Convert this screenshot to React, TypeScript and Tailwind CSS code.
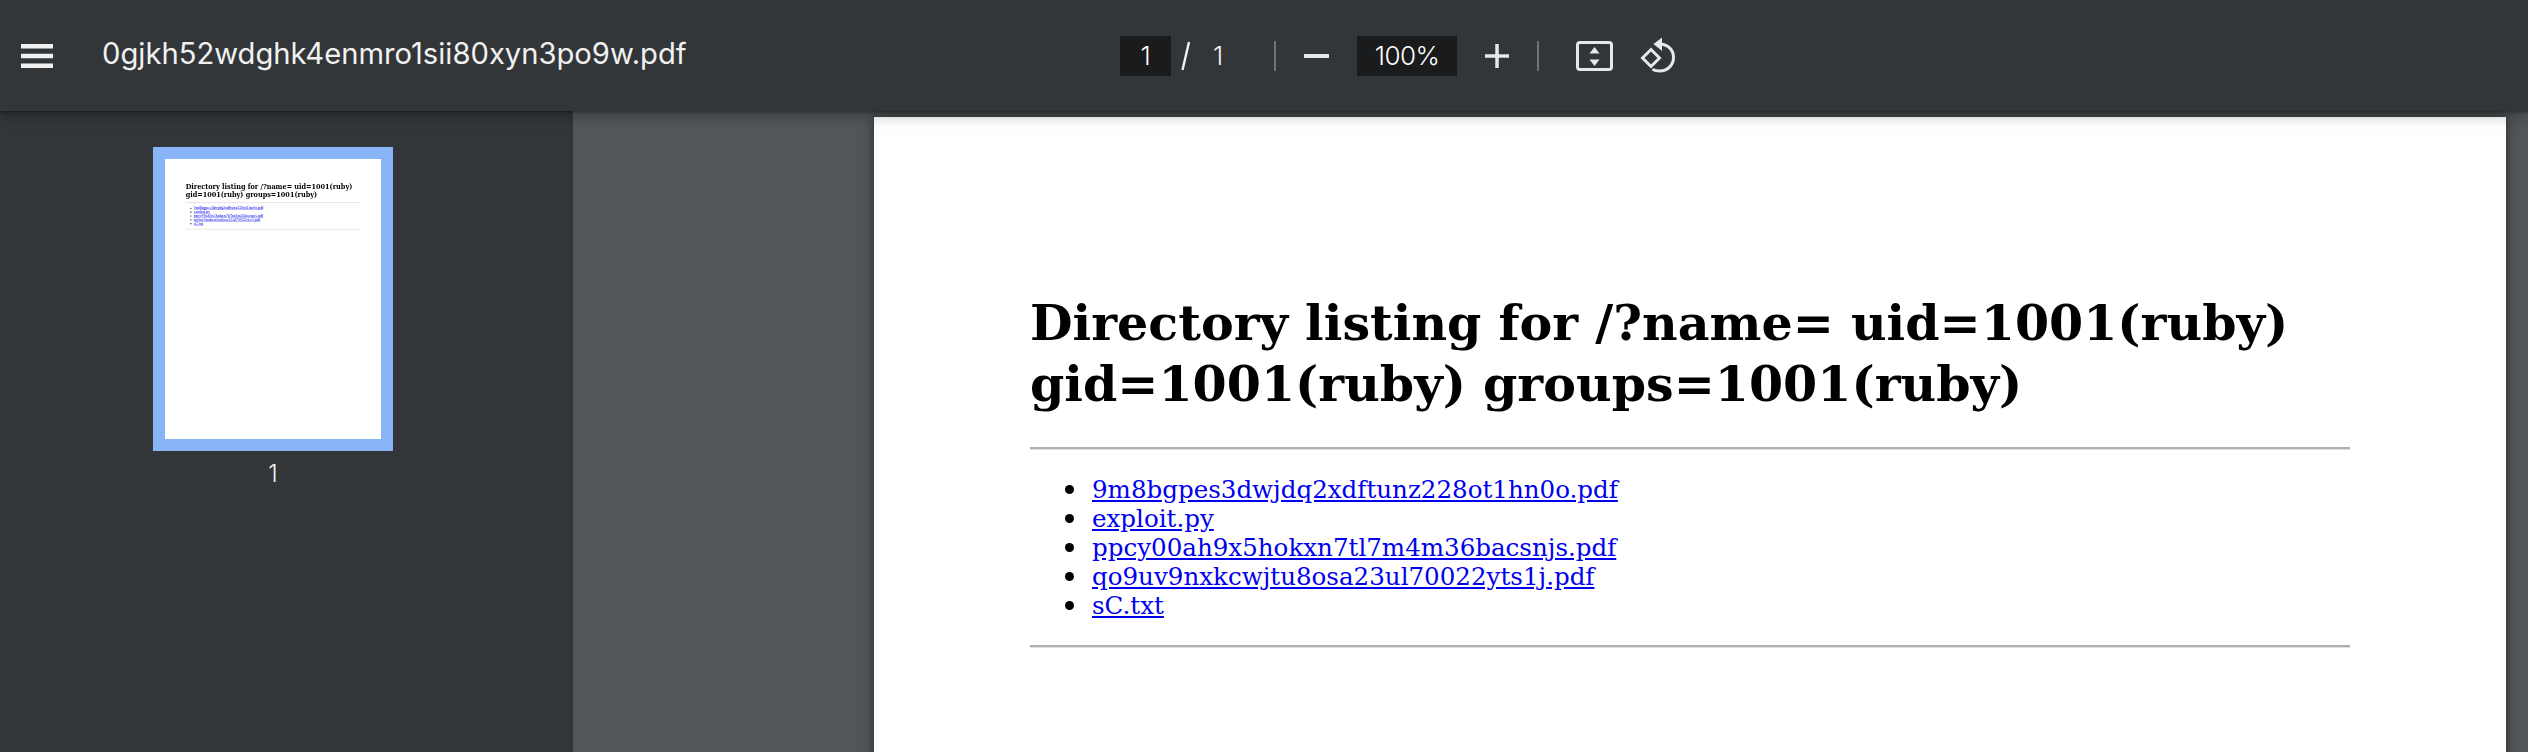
const files = [
  "9m8bgpes3dwjdq2xdftunz228ot1hn0o.pdf",
  "exploit.py",
  "ppcy00ah9x5hokxn7tl7m4m36bacsnjs.pdf",
  "qo9uv9nxkcwjtu8osa23ul70022yts1j.pdf",
  "sC.txt",
];

function PageContent() {
  return (
    <div className="w-[1632px] h-[2112px] bg-white text-black font-['DejaVu_Serif',serif] px-[156px] pt-[176px]">
      <h1 className="text-[49.1px] leading-[60.5px] font-bold">
        Directory listing for /?name= uid=1001(ruby) gid=1001(ruby) groups=1001(ruby)
      </h1>
      <hr className="mt-[33px] border-t-2 border-b border-t-[#b0b0b0] border-b-[#dedede]" />
      <ul className="mt-[25px] pl-[35px] text-[24.55px] leading-[29px]">
        {files.map((f) => (
          <li key={f} className="flex items-center gap-[18px]">
            <span className="w-[9px] h-[9px] shrink-0 rounded-full bg-black" />
            <a href="#" className="text-[#0000ee] underline">
              {f}
            </a>
          </li>
        ))}
      </ul>
      <hr className="mt-[25px] border-t-2 border-b border-t-[#b0b0b0] border-b-[#dedede]" />
    </div>
  );
}

function Sep() {
  return <div className="w-[2px] h-[30px] shrink-0 bg-[#6f7376]" />;
}

export default function App() {
  return (
    <div className="h-[752px] w-[2528px] flex flex-col overflow-hidden bg-[#525659] font-['Inter',sans-serif]">
      <header className="relative z-10 h-[111px] shrink-0 bg-[#323639] flex items-center text-[#f1f1f1] shadow-[0_1px_2px_rgba(0,0,0,0.3),0_2px_6px_rgba(0,0,0,0.15),0_6px_14px_rgba(0,0,0,0.2)]">
        <div className="w-[102px] shrink-0 pl-[21px]">
          <svg width="32" height="24" viewBox="0 0 32 24" fill="#f1f1f1" className="block">
            <rect x="0" y="0" width="32" height="4.5" />
            <rect x="0" y="9.75" width="32" height="4.5" />
            <rect x="0" y="19.5" width="32" height="4.5" />
          </svg>
        </div>
        <div className="w-[1018px] shrink-0 text-[29.2px] leading-[40px] whitespace-nowrap pb-[3px]">
          0gjkh52wdghk4enmro1sii80xyn3po9w.pdf
        </div>
        <div className="w-[51px] h-[40px] shrink-0 bg-[#191b1c] flex items-center justify-center text-[26px] text-white font-light">1</div>
        <div className="w-[103px] h-[40px] shrink-0 pl-[10px] flex items-center gap-[23px] text-[26px] font-light">
          <svg width="9" height="30" viewBox="0 0 9 30" className="block shrink-0">
            <path d="M8 1 1.5 29" stroke="#f1f1f1" strokeWidth="2.4" fill="none" />
          </svg>
          <span>1</span>
        </div>
        <Sep />
        <div className="w-[28px] shrink-0" />
        <svg width="25" height="4" viewBox="0 0 25 4" fill="#e8e8e8" className="block shrink-0">
          <rect width="25" height="4" />
        </svg>
        <div className="w-[28px] shrink-0" />
        <div className="w-[100px] h-[40px] shrink-0 bg-[#191b1c] flex items-center justify-center text-[26px] tracking-[-0.6px] text-white font-light">100%</div>
        <div className="w-[28px] shrink-0" />
        <svg width="24" height="24" viewBox="0 0 24 24" fill="#e8e8e8" className="block shrink-0">
          <rect x="0" y="10.25" width="24" height="3.5" />
          <rect x="10.25" y="0" width="3.5" height="24" />
        </svg>
        <div className="w-[28px] shrink-0" />
        <Sep />
        <div className="w-[37px] shrink-0" />
        <svg width="37" height="30" viewBox="0 0 37 30" className="block shrink-0">
          <rect x="1.5" y="1.5" width="34" height="27" rx="2.5" fill="none" stroke="#e8e8e8" strokeWidth="3" />
          <path d="M18.5 6 23.5 12.5H13.5Z M18.5 25 13.5 18.5H23.5Z" fill="#e8e8e8" />
        </svg>
        <div className="w-[27px] shrink-0" />
        <svg width="36" height="36" viewBox="0 0 36 36" fill="none" stroke="#e8e8e8" strokeWidth="3" className="block shrink-0 mb-[2px]">
          <path d="M11 12.5 19.5 21 11 29.5 2.5 21Z" />
          <path d="M19 7C28 7 33.5 13 33.5 20.5S27.5 34 19.5 34C16.5 34 14.5 33.4 12.5 32.2" />
          <path d="M22 0.5 13.5 7 22 14Z" fill="#e8e8e8" stroke="none" />
        </svg>
      </header>
      <div className="flex-1 flex min-h-0">
        <aside className="w-[573px] shrink-0 bg-[#323639] flex flex-col items-center pt-[36px] pr-[27px]">
          <div className="w-[240px] h-[304px] shrink-0 border-[12px] border-[#8ab4f8] bg-white overflow-hidden">
            <div className="origin-top-left scale-[0.1324] blur-[1.5px]">
              <PageContent />
            </div>
          </div>
          <div className="mt-[8px] text-[24px] leading-[30px] text-[#f1f1f1] font-light">1</div>
        </aside>
        <main className="flex-1 min-w-0 overflow-hidden pl-[301px] pt-[6px]">
          <div className="w-[1632px] shadow-[0_0_10px_rgba(0,0,0,0.5)]">
            <PageContent />
          </div>
        </main>
      </div>
    </div>
  );
}
